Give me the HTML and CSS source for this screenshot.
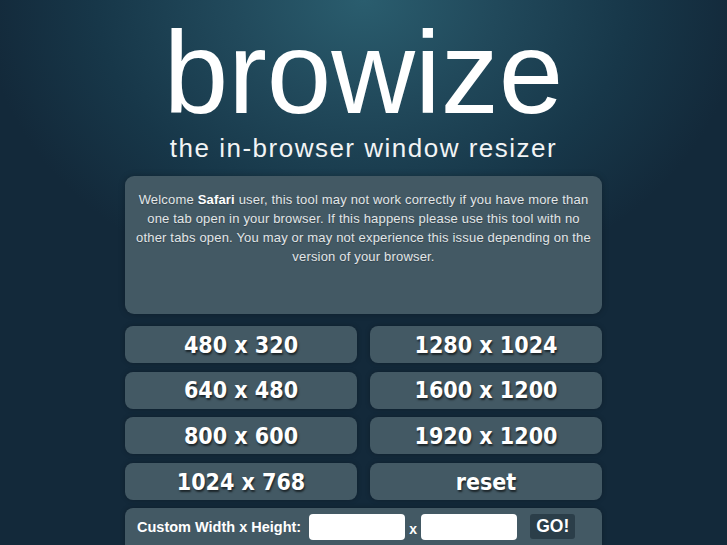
FILE: index.html
```html
<!DOCTYPE html>
<html>
<head>
<meta charset="utf-8">
<title>browize</title>
<link rel="stylesheet" href="styles.css">
</head>
<body>
<div class="page">
  <h1 class="logo">browize</h1>
  <p class="tagline">the in-browser window resizer</p>
  <div class="notice">
    Welcome <b>Safari</b> user, this tool may not work correctly if you have more than one tab open in your browser. If this happens please use this tool with no other tabs open. You may or may not experience this issue depending on the version of your browser.
  </div>
  <div class="sizes">
    <button class="size">480 x 320</button>
    <button class="size">1280 x 1024</button>
    <button class="size">640 x 480</button>
    <button class="size">1600 x 1200</button>
    <button class="size">800 x 600</button>
    <button class="size">1920 x 1200</button>
    <button class="size">1024 x 768</button>
    <button class="size">reset</button>
  </div>
  <form class="custom">
    <label class="custom-label">Custom Width x Height:</label>
    <input class="field" type="text">
    <span class="times">x</span>
    <input class="field" type="text">
    <button class="go" type="button">GO!</button>
  </form>
</div>
</body>
</html>
```
FILE: styles.css
```css
html, body {
  margin: 0;
  padding: 0;
  height: 100%;
  overflow: hidden;
}
body {
  background-color: #12293a;
  background-image: radial-gradient(ellipse 380px 300px at 50% 0, #2a5d6e 0%, #21495b 35%, #173749 70%, #13293a 100%);
  font-family: "Liberation Sans", Arial, sans-serif;
  color: #fff;
}
.page {
  width: 477px;
  margin: 0 auto;
  display: flex;
  flex-direction: column;
  align-items: stretch;
}
.logo {
  margin: 18px -40px 0;
  font-size: 116px;
  line-height: 110px;
  font-weight: normal;
  text-align: center;
  color: #fff;
}
.tagline {
  margin: 5px -40px 0;
  font-size: 26px;
  line-height: 30px;
  letter-spacing: 1.5px;
  text-align: center;
  color: #f2f4f5;
}
.notice {
  margin-top: 13px;
  height: 138px;
  box-sizing: border-box;
  padding: 14px 9px;
  background: #435964;
  border-radius: 9px;
  box-shadow: 0 0 6px rgba(0, 0, 0, 0.25);
  font-size: 13px;
  line-height: 19px;
  letter-spacing: 0.18px;
  text-align: center;
  color: #e2e6e8;
  text-shadow: 0 1px 1px rgba(0, 0, 0, 0.25);
}
.notice b {
  color: #fff;
}
.sizes {
  margin-top: 12px;
  display: grid;
  grid-template-columns: 1fr 1fr;
  grid-auto-rows: 37px;
  column-gap: 13px;
  row-gap: 8.7px;
}
.size {
  height: 37px;
  margin: 0;
  padding: 0;
  border: none;
  border-radius: 8px;
  background: #435964;
  box-shadow: 0 0 5px rgba(0, 0, 0, 0.25);
  font-family: "DejaVu Sans Condensed", "DejaVu Sans", sans-serif;
  font-weight: bold;
  font-size: 23px;
  color: #fff;
  text-shadow: 1px 2px 2px rgba(0, 0, 0, 0.6);
}
.custom {
  margin-top: 7.5px;
  height: 44px;
  box-sizing: border-box;
  padding: 6px 12px 0;
  background: #435964;
  border-radius: 8px;
  box-shadow: 0 0 5px rgba(0, 0, 0, 0.25);
  display: flex;
  align-items: flex-start;
}
.custom-label {
  font-size: 14.5px;
  font-weight: bold;
  line-height: 26px;
  color: #fff;
  margin-right: 8px;
}
.field {
  width: 96px;
  height: 26px;
  box-sizing: border-box;
  margin: 0;
  border: none;
  border-radius: 4px;
  background: #fff;
}
.times {
  width: 16px;
  text-align: center;
  font-size: 14px;
  font-weight: bold;
  line-height: 26px;
  margin-top: 2px;
  color: #fff;
}
.go {
  margin: 0 0 0 13px;
  width: 45px;
  height: 25px;
  padding: 0;
  border: none;
  border-radius: 3px;
  background: #2b3e49;
  font-family: "Liberation Sans", Arial, sans-serif;
  font-weight: bold;
  font-size: 17.5px;
  color: #fff;
}
```
